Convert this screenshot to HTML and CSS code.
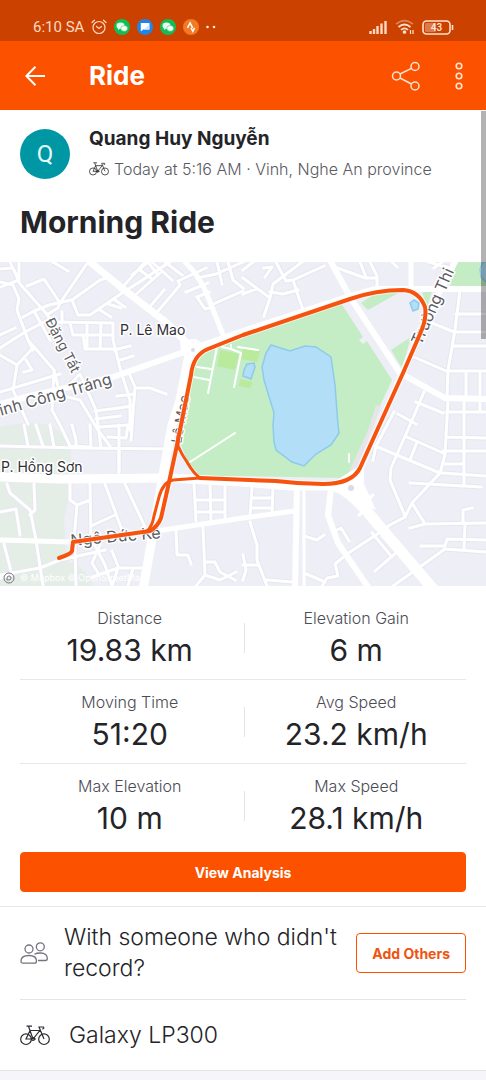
FILE: index.html
```html
<!DOCTYPE html>
<html lang="en">
    <head>
        <meta charset="utf-8">
        <meta name="viewport" content="width=device-width, initial-scale=1">
        <title>Morning Ride</title>
        <link rel="stylesheet" href="styles.css">
    </head>
    <body>
        <!-- phone status bar -->
        <div class="statusbar">
            <div class="status-left">
                <span>6:10 SA</span>
                <svg width="16" height="16" viewBox="0 0 16 16" fill="none" stroke="#ffd9c4" stroke-width="1.2" stroke-linecap="round">
                    <circle cx="8" cy="8.5" r="6"/>
                    <path d="M1 3.5 3.5 1.2M15 3.5 12.5 1.2M5.5 7.5 8 9.5l2.5-2"/>
                </svg>
                <svg width="16" height="16" viewBox="0 0 16 16">
                    <g id="chat">
                        <circle cx="8" cy="8" r="8" fill="#13bd56"/>
                        <ellipse cx="6.5" cy="6.8" rx="4" ry="3.3" fill="#e4ffee"/>
                        <ellipse cx="10.2" cy="9.4" rx="3.4" ry="2.8" fill="#fff" stroke="#13bd56" stroke-width=".5"/>
                        <path d="m4 9 0 2 2-1.2z" fill="#e4ffee"/>
                    </g>
                </svg>
                <svg width="16" height="16" viewBox="0 0 16 16">
                    <circle cx="8" cy="8" r="8" fill="#1f86e5"/>
                    <path d="M3.8 4h8.6v6.6H6.2L3.8 12.6z" fill="#fff"/>
                    <path d="m7 10.6 5.4-5v5z" fill="#cfe6ff"/>
                </svg>
                <svg width="16" height="16" viewBox="0 0 16 16"><use href="#chat"/></svg>
                <svg width="16" height="16" viewBox="0 0 16 16">
                    <circle cx="8" cy="8" r="8" fill="#f27a25"/>
                    <path d="m4.5 8.8 2.6-5 2.6 5M8 8.8l1.8 3.6 1.8-3.6" fill="none" stroke="#fff" stroke-width="1.5"/>
                </svg>
                <svg class="more-dots" width="10" height="16" viewBox="0 0 10 16" fill="#ffe6d8">
                    <circle cx="1.5" cy="8" r="1.3"/><circle cx="8" cy="8" r="1.3"/>
                </svg>
            </div>
            <div class="status-right">
                <svg width="19" height="14" viewBox="0 0 19 14" stroke="#ffd9c4" stroke-width="2.4">
                    <path d="M1.5 14v-3M5 14V9M8.5 14V6M12.5 14V3.5M16.5 14V1"/>
                </svg>
                <svg width="20" height="16" viewBox="0 0 20 16" fill="none" stroke="#ffe0cf" stroke-width="1.7">
                    <path d="M1 5.2Q9.5-2 18 5.2" opacity=".4"/>
                    <path d="M3.5 8Q9.5 3 15.5 8M6 10.8q3.5-3 7 0"/>
                    <circle cx="9.5" cy="13" r="1" fill="#ffe0cf"/>
                    <path d="M15.5 11v4M18 11v4" stroke-width="1.2"/>
                </svg>
                <svg width="32" height="15" viewBox="0 0 32 15">
                    <rect x="1" y="1" width="27" height="13" rx="3.5" fill="none" stroke="#ffe0cf" stroke-width="1.6"/>
                    <rect x="3" y="3" width="11" height="9" rx="1.5" fill="#dc7a4c"/>
                    <path d="M30.5 5v5" stroke="#ffe0cf" stroke-width="1.6"/>
                    <text class="battery" x="14.5" y="11" text-anchor="middle">43</text>
                </svg>
            </div>
        </div>

        <header class="appbar">
            <button class="icon-btn" aria-label="Back">
                <svg width="20" height="20" viewBox="0 0 20 20" fill="none" stroke="#fff" stroke-width="2">
                    <path d="M20 10H1.5M10.5.8 1.3 10l9.2 9.2"/>
                </svg>
            </button>
            <h1>Ride</h1>
            <button class="icon-btn" aria-label="Share">
                <svg width="30" height="30" viewBox="0 0 30 30" fill="none" stroke="#ffe3d3" stroke-width="1.5">
                    <circle cx="5.5" cy="15" r="4"/><circle cx="24" cy="5.5" r="4"/><circle cx="24" cy="25" r="4"/>
                    <path d="m9 13 11.500-5.700M9 17l11.500 6"/>
                </svg>
            </button>
            <button class="icon-btn" aria-label="More options">
                <svg width="8" height="28" viewBox="0 0 8 28" fill="none" stroke="#ffe3d3" stroke-width="1.6">
                    <circle cx="4" cy="4" r="2.800"/><circle cx="4" cy="14" r="2.800"/><circle cx="4" cy="24" r="2.800"/>
                </svg>
            </button>
        </header>

        <main>
            <div class="scroll-thumb"></div>

            <section class="summary">
                <div class="athlete">
                    <div class="avatar">Q</div>
                    <div>
                        <div class="name">Quang Huy Nguyễn</div>
                        <div class="meta">
                            <svg width="20" height="14" viewBox="0 0 30 21"><use href="#bike"/></svg>
                            <span>Today at 5:16 AM · Vinh, Nghe An province</span>
                        </div>
                    </div>
                </div>
                <h2>Morning Ride</h2>
            </section>

            <!-- route map -->
            <svg class="map" viewBox="0 262 486 324" role="img" aria-label="Route map">
                <defs>
                    <g id="minor">
                        <path d="M0 287 19 280 19 262M19 280 13 268 0 269M10 262 20 284 45 312 51 320M0 282 13 285 19 299 17 310 28 340 33 350"/>
                        <path d="M27 286 44 279 60 303 58 308 48 314M60 303 88 262M53 262 68 271"/>
                        <path d="M23 317 34 311 50 340M34 311 49 305 71 300M0 335 15 328M0 348 25 332 48 320 52 322"/>
                        <path d="M72 300 78 315 90 315 122 293M72 300 100 280 109 277M100 310 111 317M108 304 121 308M115 300 125 307"/>
                        <path d="M62 312 62 323M51 322 113 323 113 340M70 323 73 335 83 335 85 349 113 349M87 323 87 348M101 323 100 349M73 335 113 335"/>
                        <path d="M113 340 120 368 130 400 130 430M114 350 130 346M120 360 133 356M130 375 135 387 131 440M136 388 150 388 166 394"/>
                        <path d="M117 396 134 394M118 408 132 406M95 411 119 408M96 419 120 416M100 427 128 425M119 425 119 470"/>
                        <path d="M0 355 17 365 33 348M17 365 13 390 28 424M26 360 32 370 24 372M28 340 54 370 60 395M0 392 60 374"/>
                        <path d="M60 395 80 400 98 430 110 446M60 395 80 374 96 410 101 448M54 370 52 410 60 425 70 446 90 447"/>
                        <path d="M24 425 28 446M36 425 43 446M50 425 54 447M72 425 76 440 76 448M90 425 91 448M108 437 126 438 128 425"/>
                        <path d="M0 446 80 448 172 449M119 448 119 474"/>
                        <path d="M120 290 145 262M127 290 170 262M132 275 148 262 158 275M138 283 165 265M134 296 160 273M147 310 164 290M154 316 180 285 178 281 206 268"/>
                        <path d="M140 270 152 279M152 262 172 280M165 262 182 275M197 278 216 274 243 262M186 292 208 283M197 297 205 309 213 307M197 297 209 292M211 305 243 291M217 262 222 284M228 262 233 280 243 288"/>
                        <path d="M243 278 270 298 264 316M243 294 256 289M265 277 272 267 264 268M276 262 286 281 293 280 303 310M270 292 283 294 298 290M270 298 273 284 302 262M293 280 324 266M243 270 253 262"/>
                        <path d="M332 266 365 278 376 278M360 262 366 277M370 262 377 276 377 286M392 262 397 267M429 262 450 268M434 268 442 262"/>
                        <path d="M460 290 455 330 448 370 447 397M432 323 454 332 486 332M456 314 486 314M453 346 486 346M414 357 446 371 486 371M466 371 466 398M480 371 480 398"/>
                        <path d="M448 400 445 455 440 473M464 400 464 485M480 400 480 412M446 412 486 412M446 437 486 438M443 451 486 451M444 464 463 464M442 473 486 476"/>
                        <path d="M398 414 416 424M424 392 410 425M416 402 443 413M394 412 376 446 373 460M375 446 440 473 412 503 405 517 388 526M410 425 391 468 390 480 405 516"/>
                        <path d="M407 437 443 453M417 442 410 460M410 483 481 487M412 503 425 524 410 528M425 524 486 523M463 522 463 510 472 508M465 523 464 549M421 546 445 546 447 539 486 540M445 549 486 552"/>
                        <path d="M445 549 393 586M370 500 360 515M388 527 347 554 335 564 338 576 327 578 322 586M372 533 392 557M375 571 397 552"/>
                        <path d="M304 536 317 540 324 535M337 530 341 528 349 541M304 573 325 582M252 488 250 516M273 488 272 515M252 498 272 498M252 508 272 508"/>
                        <path d="M250 522 257 545 257 560 267 586M243 565 258 565M267 580 293 582M243 555 246 570 243 580"/>
                        <path d="M194 484 196 521M210 484 211 520M225 484 225 518M196 500 225 500M196 512 225 512M176 531 177 555 188 555 191 564M203 528 205 575 196 586M204 562 215 562 220 572 235 580M205 575 220 580 236 572"/>
                        <path d="M7 484 10 493 30 510 36 540 43 586M34 484 35 510 30 515M0 512 16 509 20 535M70 484 70 500 77 505 74 540M77 505 90 500M90 484 91 538 105 565 112 586M105 484 122 530M125 484 145 527M91 526 115 515"/>
                        <path d="M4 544 12 575 0 578M0 575 40 568 60 560 105 550M75 545 76 586M100 545 92 563 98 573M112 551 118 566M92 577 118 568 143 568M118 568 112 586M133 568 128 586"/>
                    </g>
                    <g id="major">
                        <path d="M0 404 30 396 110 378 187 351" stroke-width="6"/>
                        <path d="M90 262 127 292 167 323 190 346" stroke-width="7"/>
                        <path d="M185 262Q200 276 208 297L225 340" stroke-width="5"/>
                        <path d="M190 350 180 400 172 425 160 492 143 590" stroke-width="9"/>
                        <path d="M0 477 60 479 170 478 243 482 290 486 350 486" stroke-width="9"/>
                        <path d="M0 540 72 542 150 532 243 518 294 511" stroke-width="5"/>
                        <path d="M190 350 203 345 243 331 350 296 376 289 486 289" stroke-width="6"/>
                        <path d="M297 486 295 590" stroke-width="6"/>
                        <path d="M304 486V590" stroke-width="3"/>
                        <path d="M331 488 328 515 338 543 370 590" stroke-width="6"/>
                        <path d="M335 486Q351 491 376 522L434 590" stroke-width="11"/>
                        <path d="M455 262 427 317 400 378 360 470 359 490" stroke-width="6"/>
                        <path d="M331 262 350 297 400 373 445 398 486 399" stroke-width="6"/>
                        <path d="M411 262V290" stroke-width="5"/>
                    </g>
                </defs>

                <rect y="262" width="486" height="324" fill="#eeeef6"/>
                <path fill="#e5eee6" d="M0 427Q28 420 50 425 65 434 71 450V485L64 520 67 562Q86 566 93 586H0z"/>

                <use href="#minor" class="casing" stroke-width="5"/>
                <use href="#minor" class="road" stroke-width="3"/>

                <!-- park and water -->
                <path fill="#c5edc5" d="M190 366 203 350 243 335 341 303 363 337 359 340 363 344 367 341 392 380 368 432 350 472 340 478 243 476 200 476 187 460 179 440z"/>
                <path fill="#c5edc5" d="M361 303 376 293 402 291 368 310zM391 350 411 337 402 368zM422 291H432L427 308zM456 262H486V286H450z"/>
                <path fill="#e4e6e8" d="M376 405 381 407 356 470 346 478 368 430z"/>
                <path fill="#baea9b" d="M220 350 239 354 235 370 217 366zM243 348 260 351 257 362 241 359zM240 379 253 382 250 388 239 386z"/>
                <path class="water" d="M271 345 290 351 305 346 316 347 331 357 335 385 338 425 339 433 331 445 316 454 304 466 292 462 276 450 274 442 273 425 274 413 264 380 262 367 266 353z"/>
                <path class="water" d="M247 364 254 363 255 367 251 379 243 376 244 370zM410 303 414 300 419 303 418 309 413 311zM488 262H483L480 269 481 277 488 284z"/>
                <g class="road" stroke-width="2">
                    <path d="M197 367 211 369M194 377 209 380M217 347 208 393M222 347 231 349 241 353 234 387M231 345 231 349M238 347 258 350M190 462 235 433M349 454V462"/>
                </g>

                <use href="#major" class="road"/>
                <path fill="#fff" d="M180 340 196 339 206 346 190 366 181 352zM337 480 364 463 364 484 376 510 350 499z"/>
                <circle cx="193" cy="350" r="2" fill="#dcdce8"/>
                <circle cx="351" cy="488" r="3" fill="#dcdce8"/>
                <path class="road" stroke-width="3" d="M365 502 373 495M359 515 367 508"/>

                <g class="street">
                    <text x="120" y="335">P. Lê Mao</text>
                    <text x="1" y="472">P. Hồng Sơn</text>
                    <text class="soft" transform="translate(45 321) rotate(63)">Đặng Tất</text>
                    <text class="soft big" transform="translate(-10 419) rotate(-16)">Đinh Công Tráng</text>
                    <text class="soft" transform="translate(181 444) rotate(-80)">Lê Mao</text>
                    <text class="soft big" transform="translate(421 346) rotate(-66)">Trường Thi</text>
                    <text class="soft big" transform="translate(71 546) rotate(-5)">Ngô Đức Kế</text>
                </g>

                <g class="route">
                    <path class="halo" d="M73 542 150 531Q158 526 161 518L168 487 177 445 191 375Q193 355 208 349L243 335 350 299Q376 290 403 290 419 291 425 307 427 319 420 334L403 373 360 468Q352 484 323 484 300 484 276 481L200 478"/>
                    <path d="M59 558Q71 554 72 551L73 542 150 531Q158 526 161 518L168 487 177 445 191 375Q193 355 208 349L243 335 350 299Q376 290 403 290 419 291 425 307 427 319 420 334L403 373 360 468Q352 484 323 484 300 484 276 481L200 478"/>
                    <path class="thin" d="M178 436V446Q182 455 187 462 194 474 200 478L173 480Q163 482 159 497L154 516Q152 527 147 531"/>
                </g>

                <g class="attribution">
                    <circle cx="9" cy="578" r="5"/>
                    <path d="M7 580v-2a2 2 0 1 1 2 2z"/>
                    <text x="20" y="581">© Mapbox © OpenStreetMap</text>
                </g>
            </svg>

            <section class="stats">
                <div class="stat-row">
                    <div class="stat"><div class="label">Distance</div><div class="value">19.83 km</div></div>
                    <div class="stat"><div class="label">Elevation Gain</div><div class="value">6 m</div></div>
                </div>
                <div class="stat-row">
                    <div class="stat"><div class="label">Moving Time</div><div class="value">51:20</div></div>
                    <div class="stat"><div class="label">Avg Speed</div><div class="value">23.2 km/h</div></div>
                </div>
                <div class="stat-row">
                    <div class="stat"><div class="label">Max Elevation</div><div class="value">10 m</div></div>
                    <div class="stat"><div class="label">Max Speed</div><div class="value">28.1 km/h</div></div>
                </div>
                <button class="btn primary">View Analysis</button>
            </section>

            <section class="others">
                <svg width="28" height="22" viewBox="0 0 28 22" fill="none" stroke="#74747e" stroke-width="1.3">
                    <circle cx="9" cy="7" r="4"/><circle cx="20.3" cy="4.8" r="4"/>
                    <path d="M3 21.2Q1 21.2 1 19C1 15 4 13.5 9 13.5S16.5 15 16.5 19Q16.5 21.2 14.5 21.2z"/>
                    <path d="M14.5 12.3C16 11.3 18 11 20.5 11 25 11 27.300 13 27.300 16.500Q27.300 18.500 25.500 18.500H18"/>
                </svg>
                <p>With someone who didn't record?</p>
                <button class="btn outline">Add Others</button>
            </section>

            <section class="gear">
                <svg width="30" height="21" viewBox="0 0 30 21">
                    <g id="bike" fill="none" stroke="#2b2b30" stroke-width="1.2">
                        <circle cx="6" cy="14.2" r="5.3"/><circle cx="24" cy="14.2" r="5.3"/>
                        <path d="M6 14 10 5.500H19.800L13 14zM6.500 1.200H12M8.500 1.200 13 14M24 14 19 2H23.500Q24.500 4 22 4M13 14h3"/>
                        <circle cx="13" cy="14" r="1.500"/>
                    </g>
                </svg>
                <p>Galaxy LP300</p>
            </section>
        </main>
    </body>
</html>
```

FILE: styles.css
```css
* {
    box-sizing: border-box;
}

body {
    margin: 0;
    background: #f6f6fa;
    color: #242428;
    font-family: Inter, "Liberation Sans", sans-serif;
}

h1, h2, p {
    margin: 0;
}

button {
    font-family: inherit;
    cursor: pointer;
}

svg {
    flex-shrink: 0;
}

/* status bar */
.statusbar {
    display: flex;
    justify-content: space-between;
    height: 41px;
    padding: 12px 32px 0 33px;
    background: #cb4200;
    color: #ffd9c4;
    font: 15px/30px Roboto, sans-serif;
}

.status-left, .status-right {
    display: flex;
    align-items: center;
    height: 30px;
    gap: 7px;
}

.status-left {
    gap: 6px 7px;
}

.battery {
    font: 500 10px Roboto, sans-serif;
    fill: #ffe9dd;
}

/* app bar */
.appbar {
    display: flex;
    align-items: center;
    height: 69px;
    padding: 0 13px 0 15px;
    background: #fc5200;
    color: #fff;
}

.appbar h1 {
    flex: 1;
    margin-left: 34px;
    font-size: 26px;
    line-height: 32px;
    font-weight: 700;
}

.icon-btn {
    display: flex;
    padding: 10px;
    border: 0;
    background: none;
}

.icon-btn + .icon-btn {
    margin-left: 14px;
}

main {
    position: relative;
    background: #fff;
    border-bottom: 1px solid #e4e4e8;
}

.scroll-thumb {
    position: absolute;
    top: 1px;
    right: 0;
    width: 5px;
    height: 228px;
    background: rgba(0, 0, 0, .3);
}

/* athlete and title */
.summary {
    padding: 14px 20px 20px;
}

.athlete {
    display: flex;
    align-items: center;
    gap: 19px;
}

.avatar {
    width: 50px;
    height: 50px;
    border-radius: 50%;
    background: #0097a5;
    color: #e4fbfc;
    font: 24px/50px Roboto, sans-serif;
    text-align: center;
}

.name {
    font-size: 19px;
    line-height: 30px;
    font-weight: 700;
}

.meta {
    display: flex;
    align-items: center;
    gap: 5px;
    color: #5a5a62;
    font-size: 16px;
    line-height: 30px;
    font-weight: 300;
}

.summary h2 {
    margin-top: 18px;
    font-size: 30px;
    line-height: 40px;
    font-weight: 700;
}

/* map */
.map {
    display: block;
    width: 100%;
    height: auto;
}

.casing {
    fill: none;
    stroke: #e6e6f1;
    stroke-linejoin: round;
}

.road {
    fill: none;
    stroke: #fff;
    stroke-linejoin: round;
    stroke-linecap: round;
}

.water {
    fill: #b3def7;
    stroke: #8ccbea;
    stroke-width: 1.5;
}

.street {
    font-size: 14px;
    fill: #303036;
    stroke: #fff;
    stroke-width: 3px;
    stroke-linejoin: round;
    paint-order: stroke;
}

.street .soft {
    fill: #5c5c62;
}

.street .big {
    font-size: 16px;
}

.route path {
    fill: none;
    stroke: #f6530f;
    stroke-width: 4;
    stroke-linejoin: round;
    stroke-linecap: round;
}

.route .thin {
    stroke-width: 3;
}

.route .halo {
    stroke: #fff;
    stroke-width: 6;
    opacity: .7;
}

.attribution {
    fill: none;
    stroke: #77777c;
}

.attribution text {
    font-size: 9px;
    fill: #fff;
    stroke: none;
}

/* stats */
.stats {
    padding: 10px 20px 14px;
}

.stat-row {
    display: flex;
    border-bottom: 1px solid #e8e8eb;
}

.stat-row:nth-child(3) {
    border-bottom: 0;
}

.stat {
    flex: 1;
    padding: 12px 4px 7px 0;
    text-align: center;
}

.stat + .stat {
    padding: 12px 0 7px 3px;
    background: linear-gradient(#e4e4e8, #e4e4e8) left center / 1px 30px no-repeat;
}

.label {
    color: #4c4c54;
    font-size: 16px;
    line-height: 20px;
    font-weight: 300;
}

.value {
    font-size: 30px;
    line-height: 44px;
    font-weight: 400;
}

.btn {
    height: 40px;
    padding: 0 15px;
    border: 1px solid #fc5200;
    border-radius: 4px;
    font-size: 14px;
    font-weight: 700;
}

.primary {
    display: block;
    width: 100%;
    margin-top: 5px;
    background: #fc5200;
    color: #fff;
}

.outline {
    flex-shrink: 0;
    background: #fff;
    color: #ee5312;
}

/* rows under the stats */
.others {
    display: flex;
    align-items: center;
    gap: 16px;
    padding: 15px 20px;
    border-top: 1px solid #e8e8eb;
    font-size: 23px;
    line-height: 31px;
    font-weight: 300;
}

.others p {
    flex: 1;
}

.gear {
    display: flex;
    align-items: center;
    gap: 19px;
    margin: 0 20px;
    padding: 20px 0;
    border-top: 1px solid #e4e4e8;
    font-size: 23px;
    line-height: 30px;
    font-weight: 300;
}
```
